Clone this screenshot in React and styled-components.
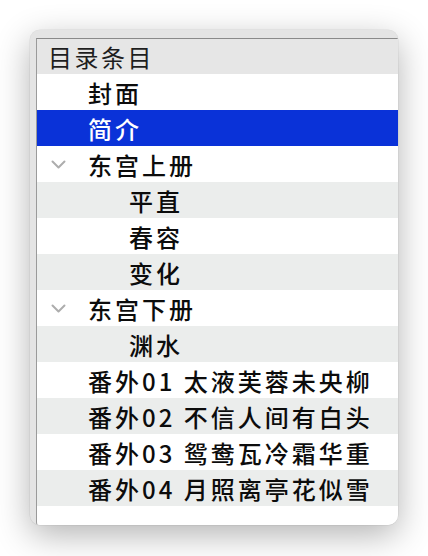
import React from "react";
import styled, { createGlobalStyle } from "styled-components";

const GlobalStyle = createGlobalStyle`
  html, body {
    margin: 0;
    padding: 0;
    background: #ffffff;
  }
  body {
    font-family: "Noto Sans CJK SC", "Noto Sans", sans-serif;
  }
`;

const entries = [
  { title: "封面", level: 0 },
  { title: "简介", level: 0, selected: true },
  { title: "东宫上册", level: 0, open: true },
  { title: "平直", level: 1 },
  { title: "春容", level: 1 },
  { title: "变化", level: 1 },
  { title: "东宫下册", level: 0, open: true },
  { title: "渊水", level: 1 },
  { title: "番外01 太液芙蓉未央柳", level: 0 },
  { title: "番外02 不信人间有白头", level: 0 },
  { title: "番外03 鸳鸯瓦冷霜华重", level: 0 },
  { title: "番外04 月照离亭花似雪", level: 0 },
];

function Chevron() {
  return (
    <svg width="15" height="9" viewBox="0 0 15 9">
      <path
        d="M1.5 1.5 L7.5 7.5 L13.5 1.5"
        fill="none"
        stroke="#adadad"
        strokeWidth="2"
        strokeLinecap="round"
        strokeLinejoin="round"
      />
    </svg>
  );
}

function App() {
  return (
    <Page>
      <GlobalStyle />
      <Window>
        <Outline>
          <Header>目录条目</Header>
          {entries.map((item, i) => (
            <Row key={item.title} $odd={i % 2 === 1} $selected={item.selected}>
              <Disclosure>{item.open && <Chevron />}</Disclosure>
              <Title $level={item.level}>{item.title}</Title>
            </Row>
          ))}
        </Outline>
      </Window>
    </Page>
  );
}

const Page = styled.div`
  width: 428px;
  height: 556px;
  padding: 30px 0 0 30px;
  box-sizing: border-box;
`;

const Window = styled.div`
  width: 368px;
  height: 495px;
  background: #e4e4e4;
  border-radius: 10px;
  box-shadow: 0 10px 34px rgba(0, 0, 0, 0.3), 0 0 0 0.5px rgba(0, 0, 0, 0.08);
  padding: 8px 0 0 6px;
  box-sizing: border-box;
  overflow: hidden;
`;

const Outline = styled.div`
  display: flex;
  flex-direction: column;
  height: 100%;
  background: #ffffff;
  border-top: 1px solid #8a8a8a;
  border-left: 1px solid #9a9a9a;
  border-bottom-left-radius: 4px;
`;

const Header = styled.div`
  height: 35px;
  display: flex;
  align-items: center;
  padding-left: 11px;
  background: #e6e6e6;
  color: #1e1e1e;
  font-size: 24px;
  letter-spacing: 2.5px;
`;

const Row = styled.div`
  height: 36px;
  display: flex;
  align-items: center;
  background: ${(p) => (p.$selected ? "#0a32d8" : p.$odd ? "#ebedec" : "#ffffff")};
  color: ${(p) => (p.$selected ? "#ffffff" : "#0c0c0c")};
`;

const Disclosure = styled.div`
  width: 51px;
  display: flex;
  justify-content: flex-end;
  padding-right: 22px;
  box-sizing: border-box;
  flex-shrink: 0;
`;

const Title = styled.span`
  padding-left: ${(p) => p.$level * 41}px;
  font-size: 24px;
  font-weight: 500;
  letter-spacing: 3px;
  white-space: nowrap;
`;

export default App;
